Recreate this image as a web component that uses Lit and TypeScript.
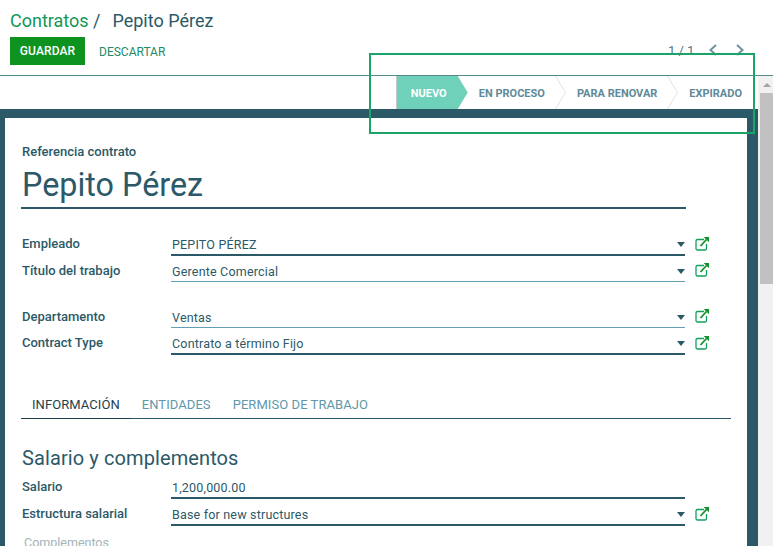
import { LitElement, css, html, svg } from "lit";
import { customElement } from "lit/decorators.js";
import { classMap } from "lit/directives/class-map.js";

const linkIcon = html`<svg class="ext" viewBox="0 0 15 15" width="15" height="15">
  ${svg`<path d="M9 3.5H2.5a1.5 1.5 0 0 0-1.5 1.5v7.5a1.5 1.5 0 0 0 1.5 1.5H10a1.5 1.5 0 0 0 1.5-1.5V8" fill="none" stroke="#12a05c" stroke-width="1.3"/>
  <path d="M5.5 10 L11.5 3.5" stroke="#12902a" stroke-width="1.8" fill="none"/>
  <path d="M8.7 1 H14 V6.3 Z" fill="#12902a"/>`}
</svg>`;

const chevron = (left: boolean) => html`<svg width="10" height="12" viewBox="0 0 10 12">
  <path d=${left ? "M8 1 L2.5 6 L8 11" : "M2 1 L7.5 6 L2 11"} fill="none" stroke="#71939f" stroke-width="2"/>
</svg>`;

@customElement("app-root")
export class AppRoot extends LitElement {
  static styles = css`
    :host {
      display: block;
      position: relative;
      width: 773px;
      height: 546px;
      overflow: hidden;
      background: #fff;
      font-family: Roboto, "Liberation Sans", sans-serif;
      font-size: 13px;
      color: #2c5967;
    }
    .panel {
      height: 76px;
      box-sizing: border-box;
      padding: 10px 10px 0;
      border-bottom: 1px solid #55898a;
    }
    .crumbs {
      font-size: 18px;
      line-height: 21px;
      height: 27px;
      white-space: pre;
    }
    .crumbs span {
      color: #12985a;
    }
    .crumbs b {
      font-weight: 400;
      color: #2c5967;
      margin-left: 3px;
    }
    .actions {
      display: flex;
      align-items: center;
    }
    .save {
      width: 75px;
      height: 28px;
      background: #0f9320;
      color: #fff;
      font-size: 12px;
      font-weight: 500;
      letter-spacing: 0.01em;
      display: flex;
      align-items: center;
      justify-content: center;
    }
    .discard {
      margin: 1px 0 0 14px;
      font-size: 12px;
      color: #218a6a;
    }
    .pager {
      margin-left: auto;
      padding-right: 18px;
      display: flex;
      align-items: center;
      font-size: 13px;
      color: #55777f;
      height: 28px;
      position: relative;
      top: -1px;
    }
    .pager .num {
      width: 40px;
    }
    .pager svg + svg {
      margin-left: 17px;
    }
    .body {
      display: flex;
      height: 470px;
    }
    .main {
      flex: 1;
      min-width: 0;
      display: flex;
      flex-direction: column;
    }
    .status {
      height: 33px;
      flex: none;
      display: flex;
      justify-content: flex-end;
      padding-right: 5px;
      box-sizing: border-box;
    }
    .step {
      height: 33px;
      box-sizing: border-box;
      display: flex;
      align-items: center;
      position: relative;
      padding: 2px 21px 0 11px;
      font-size: 11px;
      font-weight: 700;
      color: #5e8a99;
      white-space: nowrap;
    }
    .step svg {
      position: absolute;
      right: 0;
      top: 0;
    }
    .step:last-child {
      padding-right: 11px;
    }
    .step.on {
      width: 72px;
      padding: 2px 0 0 15px;
      color: #fff;
      background: linear-gradient(#c8c8c8, #c8c8c8) left / 1px 100% no-repeat, #70d1bb;
      clip-path: polygon(0 0, 62px 0, 72px 50%, 62px 100%, 0 100%);
    }
    .sheet {
      flex: 1;
      border-style: solid;
      border-color: #2c5967;
      border-width: 9px 11px 0 5px;
      padding: 26px 16px 0 16px;
      min-height: 0;
      overflow: hidden;
    }
    .ref {
      font-size: 13px;
      font-weight: 500;
      line-height: 16px;
      padding-left: 1px;
    }
    .title {
      font-size: 32.3px;
      line-height: 37px;
      margin-top: 7px;
      width: 665px;
      height: 42px;
      box-sizing: border-box;
      padding-left: 1px;
      border-bottom: 2px solid #2c5967;
    }
    .group {
      width: 710px;
    }
    .row {
      display: grid;
      grid-template-columns: 150px 514px 1fr;
      align-items: end;
      height: 26px;
    }
    .row.tall {
      height: 27px;
    }
    .label {
      font-size: 13px;
      font-weight: 500;
      padding-left: 1px;
      align-self: start;
      padding-top: 7px;
      line-height: 16px;
    }
    .value {
      height: 100%;
      box-sizing: border-box;
      border-bottom: 1px solid #659db5;
      display: flex;
      align-items: center;
      justify-content: space-between;
      padding: 6px 0 0 1px;
      font-size: 12.5px;
      letter-spacing: 0.015em;
    }
    .value.strong {
      border-bottom: 2px solid #2c5967;
    }
    .caret {
      width: 0;
      height: 0;
      border-left: 4px solid transparent;
      border-right: 4px solid transparent;
      border-top: 5px solid #2c5967;
    }
    .ext {
      margin: 1px 0 0 10px;
      align-self: center;
      display: block;
    }
    .first {
      margin-top: 20px;
    }
    .second {
      margin-top: 20px;
    }
    .tabs {
      margin-top: 34px;
      height: 29px;
      width: 710px;
      display: flex;
      border-bottom: 1px solid #2c5967;
      font-size: 13px;
      color: #5f97ab;
      letter-spacing: 0.005em;
    }
    .tab {
      padding: 8px 11px 0;
    }
    .tab.active {
      color: #1f3f4a;
      box-shadow: 0 1px 0 #1f3f4a;
    }
    h2 {
      margin: 27px 0 0;
      font-size: 20px;
      font-weight: 400;
      line-height: 24px;
      letter-spacing: 0.005em;
      padding-left: 1px;
    }
    .pay {
      margin-top: 2px;
    }
    .more {
      margin-top: 9px;
      padding-left: 3px;
      font-size: 12.5px;
      color: #a4b4b8;
    }
    .scrollbar {
      width: 15px;
      flex: none;
      background: #f1f1f1;
      display: flex;
      flex-direction: column;
      align-items: flex-end;
    }
    .up {
      height: 17px;
      width: 13px;
      display: flex;
      justify-content: center;
      align-items: center;
    }
    .up i {
      border-left: 4px solid transparent;
      border-right: 4px solid transparent;
      border-bottom: 4px solid #a3a3a3;
    }
    .thumb {
      width: 13px;
      height: 191px;
      background: #c1c1c1;
    }
    .highlight {
      position: absolute;
      left: 369px;
      top: 53px;
      width: 386px;
      height: 81px;
      box-sizing: border-box;
      border: 2px solid #1aa468;
      pointer-events: none;
    }
  `;

  private field(label: string, value: string, strong: boolean, select = true) {
    return html`<div class=${classMap({ row: true, tall: strong })}>
      <div class="label">${label}</div>
      <div class=${classMap({ value: true, strong })}>
        <span>${value}</span>${select ? html`<i class="caret"></i>` : ""}
      </div>
      ${select ? linkIcon : ""}
    </div>`;
  }

  private divider() {
    return html`<svg width="11" height="33" viewBox="0 0 11 33">
      <path d="M0.5 0 L10.5 16.5 L0.5 33" fill="none" stroke="#e2e2e2"/>
    </svg>`;
  }

  render() {
    return html`
      <header class="panel">
        <div class="crumbs"><span>Contratos</span> /  <b>Pepito Pérez</b></div>
        <div class="actions">
          <div class="save">GUARDAR</div>
          <div class="discard">DESCARTAR</div>
          <div class="pager">
            <span class="num">1 / 1</span>${chevron(true)}${chevron(false)}
          </div>
        </div>
      </header>
      <div class="body">
        <div class="main">
          <div class="status">
            <div class="step on">NUEVO</div>
            <div class="step">EN PROCESO${this.divider()}</div>
            <div class="step">PARA RENOVAR${this.divider()}</div>
            <div class="step">EXPIRADO</div>
          </div>
          <div class="sheet">
            <div class="ref">Referencia contrato</div>
            <div class="title">Pepito Pérez</div>
            <div class="group first">
              ${this.field("Empleado", "PEPITO PÉREZ", true)}
              ${this.field("Título del trabajo", "Gerente Comercial", false)}
            </div>
            <div class="group second">
              ${this.field("Departamento", "Ventas", false)}
              ${this.field("Contract Type", "Contrato a término Fijo", true)}
            </div>
            <div class="tabs">
              <div class="tab active">INFORMACIÓN</div>
              <div class="tab">ENTIDADES</div>
              <div class="tab">PERMISO DE TRABAJO</div>
            </div>
            <h2>Salario y complementos</h2>
            <div class="group pay">
              ${this.field("Salario", "1,200,000.00", true, false)}
              ${this.field("Estructura salarial", "Base for new structures", true)}
            </div>
            <div class="more">Complementos</div>
          </div>
        </div>
        <div class="scrollbar">
          <div class="up"><i></i></div>
          <div class="thumb"></div>
        </div>
      </div>
      <div class="highlight"></div>
    `;
  }
}
